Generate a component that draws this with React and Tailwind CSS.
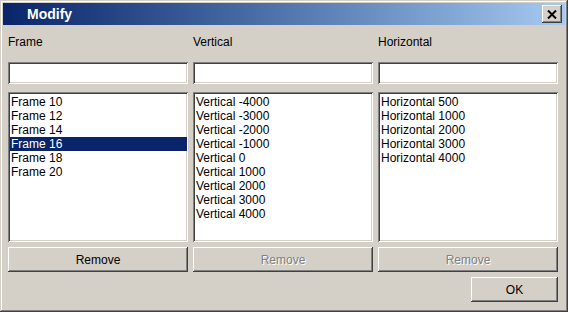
const frames = ["Frame 10", "Frame 12", "Frame 14", "Frame 16", "Frame 18", "Frame 20"];
const verticals = [
  "Vertical -4000",
  "Vertical -3000",
  "Vertical -2000",
  "Vertical -1000",
  "Vertical 0",
  "Vertical 1000",
  "Vertical 2000",
  "Vertical 3000",
  "Vertical 4000",
];
const horizontals = ["Horizontal 500", "Horizontal 1000", "Horizontal 2000", "Horizontal 3000", "Horizontal 4000"];

const sunken =
  "bg-white shadow-[inset_1px_1px_#808080,inset_-1px_-1px_#ffffff,inset_2px_2px_#404040,inset_-2px_-2px_#d4d0c8]";
const raised =
  "bg-[#d4d0c8] shadow-[inset_-1px_-1px_#404040,inset_1px_1px_#ffffff,inset_-2px_-2px_#808080,inset_2px_2px_#d4d0c8]";

function Column({ label, items, selected, disabled }) {
  return (
    <div className="flex flex-col">
      <div className="h-[14px] leading-[14px]">{label}</div>
      <input type="text" className={`mt-[13px] h-[22px] w-full outline-none px-[4px] ${sunken}`} />
      <div className={`mt-[8px] h-[150px] pt-[3px] pl-[2px] pr-[1px] overflow-hidden ${sunken}`}>
        {items.map((it) => (
          <div
            key={it}
            className={`h-[14px] leading-[14px] pl-[1px] ${it === selected ? "bg-[#0a246a] text-white" : ""}`}
          >
            {it}
          </div>
        ))}
      </div>
      <button
        className={`mt-[5px] h-[25px] w-full ${raised} ${
          disabled ? "text-[#808080] text-shadow-[1px_1px_0_#ffffff]" : "text-black"
        }`}
      >
        Remove
      </button>
    </div>
  );
}

export default function App() {
  return (
    <div
      className="w-[568px] h-[312px] bg-[#d4d0c8] p-[3px] text-[12px] text-black shadow-[inset_-1px_-1px_#404040,inset_1px_1px_#d4d0c8,inset_-2px_-2px_#808080,inset_2px_2px_#ffffff]"
      style={{ fontFamily: '"Liberation Sans", Arial, sans-serif' }}
    >
      <div className="h-[22px] flex items-center bg-gradient-to-r from-[#0a246a] to-[#a6caf0] pl-[24px] pr-[3px]">
        <span className="text-white font-bold text-[14px] leading-none">Modify</span>
        <button className={`ml-auto h-[18px] w-[20px] flex items-center justify-center ${raised}`}>
          <svg width="10" height="9" viewBox="0 0 10 9">
            <path d="M1 0.5 L9 8.5 M9 0.5 L1 8.5" stroke="#000" strokeWidth="2" />
          </svg>
        </button>
      </div>
      <div className="ml-[5px] w-[550px] pt-[10px]">
        <div className="grid grid-cols-[180px_180px_180px] gap-x-[5px]">
          <Column label="Frame" items={frames} selected="Frame 16" />
          <Column label="Vertical" items={verticals} disabled />
          <Column label="Horizontal" items={horizontals} disabled />
        </div>
        <div className="flex justify-end mt-[5px]">
          <button className={`h-[25px] w-[87px] ${raised}`}>OK</button>
        </div>
      </div>
    </div>
  );
}
